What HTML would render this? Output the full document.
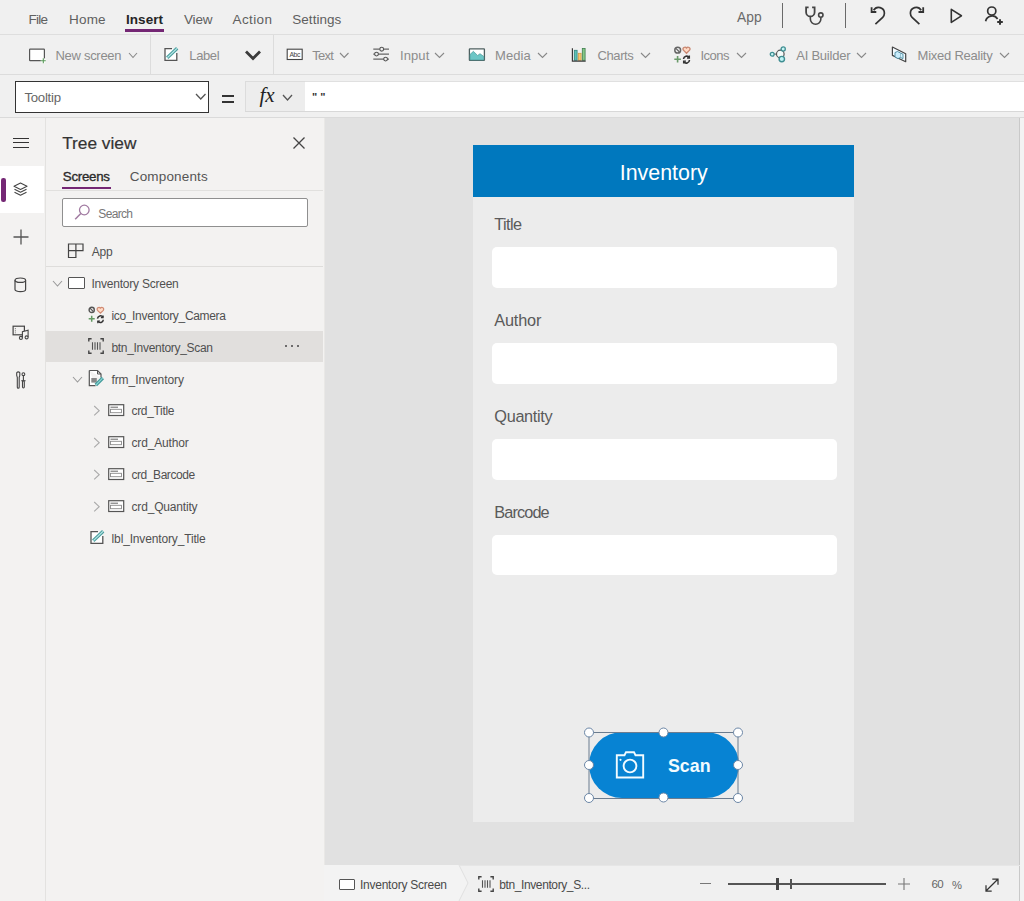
<!DOCTYPE html>
<html><head><meta charset="utf-8">
<style>
*{box-sizing:border-box;margin:0;padding:0}
html,body{width:1024px;height:901px;overflow:hidden;background:#f0f0f0;font-family:"Liberation Sans",sans-serif;color:#323130}
.a{position:absolute}
.t{position:absolute;white-space:nowrap}
svg{position:absolute;overflow:visible}
</style></head><body>
<div class="a" style="left:0px;top:0px;width:1024px;height:34px;background:#f0f0f0"></div>
<div class="a" style="left:0px;top:34px;width:1024px;height:1px;background:#dedede"></div>
<div class="t" style="left:28.6px;top:13.07px;font-size:13.5px;line-height:13.5px;color:#5f5f5f;font-weight:normal;letter-spacing:-0.778px;">File</div>
<div class="t" style="left:69.0px;top:13.07px;font-size:13.5px;line-height:13.5px;color:#5f5f5f;font-weight:normal;letter-spacing:0.185px;">Home</div>
<div class="t" style="left:126.0px;top:13.07px;font-size:13.5px;line-height:13.5px;color:#252525;font-weight:bold;letter-spacing:0.042px;">Insert</div>
<div class="a" style="left:125px;top:29px;width:39px;height:2.5px;background:#742774"></div>
<div class="t" style="left:184.0px;top:13.07px;font-size:13.5px;line-height:13.5px;color:#5f5f5f;font-weight:normal;letter-spacing:-0.175px;">View</div>
<div class="t" style="left:232.5px;top:13.07px;font-size:13.5px;line-height:13.5px;color:#5f5f5f;font-weight:normal;letter-spacing:0.394px;">Action</div>
<div class="t" style="left:292.3px;top:13.07px;font-size:13.5px;line-height:13.5px;color:#5f5f5f;font-weight:normal;letter-spacing:0.028px;">Settings</div>
<div class="t" style="left:737.0px;top:11.12px;font-size:13.8px;line-height:13.8px;color:#6a6a6a;font-weight:normal;letter-spacing:0.018px;">App</div>
<div class="a" style="left:781.5px;top:3px;width:1.2px;height:25px;background:#6a6a6a"></div>
<div class="a" style="left:845px;top:3px;width:1.2px;height:25px;background:#6a6a6a"></div>
<svg style="left:803px;top:6px" width="22" height="20" viewBox="0 0 22 20"><path d="M5.6 1.3 H3.1 V6.2 A4.25 4.25 0 0 0 11.6 6.2 V1.3 H9.1" fill="none" stroke="#444" stroke-width="1.8"/><path d="M7.35 10.4 V13 A5.25 5.25 0 0 0 17.85 13 V11.4" fill="none" stroke="#444" stroke-width="1.6"/><circle cx="17.8" cy="9.1" r="2.2" fill="none" stroke="#444" stroke-width="1.6"/></svg>
<svg style="left:866px;top:2px" width="64" height="26" viewBox="0 0 64 26"><path d="M5.6 5.3 V10 H10.3" fill="none" stroke="#333" stroke-width="1.8"/><path d="M7.6 8.3 A5.8 5.8 0 0 1 18.4 11.3 A5.8 5.8 0 0 1 16.7 15.4 L9.4 22.2" fill="none" stroke="#333" stroke-width="1.7"/><g transform="translate(62.8,0) scale(-1,1)"><path d="M5.6 5.3 V10 H10.3" fill="none" stroke="#333" stroke-width="1.8"/><path d="M7.6 8.3 A5.8 5.8 0 0 1 18.4 11.3 A5.8 5.8 0 0 1 16.7 15.4 L9.4 22.2" fill="none" stroke="#333" stroke-width="1.7"/></g></svg>
<svg style="left:949px;top:7px" width="16" height="18" viewBox="0 0 16 18"><path d="M2.3 2.4 L12.4 8.8 L2.3 15.4 Z" fill="none" stroke="#333" stroke-width="1.6" stroke-linejoin="round"/></svg>
<svg style="left:945px;top:2px" width="64" height="26" viewBox="0 0 64 26"><circle cx="46.75" cy="9.1" r="4.1" fill="none" stroke="#333" stroke-width="1.7"/><path d="M40.6 19.2 A6.6 6.6 0 0 1 52.6 17" fill="none" stroke="#333" stroke-width="1.7"/><path d="M55 17.2 V22.8 M52.2 20 H57.8" stroke="#333" stroke-width="2"/></svg>
<div class="a" style="left:0px;top:35px;width:1024px;height:40px;background:#f0f0f0"></div>
<div class="a" style="left:0px;top:74px;width:1024px;height:1px;background:#dcdcdc"></div>
<svg style="left:28px;top:47px" width="20" height="16" viewBox="0 0 20 16"><rect x="1.6" y="2.1" width="14.8" height="11.5" rx="0.6" fill="#fff" stroke="#555" stroke-width="1.2"/><path d="M15.3 11.3 V16.3 M12.8 13.8 H17.8" stroke="#fff" stroke-width="3"/><path d="M15.3 11.3 V16.3 M12.8 13.8 H17.8" stroke="#5a9a5a" stroke-width="1.1"/></svg>
<div class="t" style="left:55.5px;top:49.00px;font-size:13.0px;line-height:13.0px;color:#8c8c8c;font-weight:normal;letter-spacing:-0.293px;">New screen</div>
<svg style="left:127.5px;top:52px" width="10" height="6.5" viewBox="0 0 10 6.5"><path d="M1 1 L5.0 5.5 L9 1" fill="none" stroke="#888" stroke-width="1.1"/></svg>
<div class="a" style="left:150px;top:35px;width:1px;height:40px;background:#dcdcdc"></div>
<svg style="left:164px;top:47px" width="16" height="16" viewBox="0 0 16 16"><path d="M8 1.6 H1 V13.4 H12.8 V6" fill="#fff" stroke="#555" stroke-width="1.3"/><path d="M3.2 10.8 L13.2 1.2" stroke="#4a9e9e" stroke-width="3.3"/><path d="M3.4 10.6 L13 1.4" stroke="#b9e8e8" stroke-width="1.3"/></svg>
<div class="t" style="left:189.3px;top:49.00px;font-size:13.0px;line-height:13.0px;color:#8c8c8c;font-weight:normal;letter-spacing:-0.396px;">Label</div>
<svg style="left:244px;top:49px" width="18" height="13" viewBox="0 0 18 13"><path d="M2 2.5 L9 9.5 L16 2.5" fill="none" stroke="#3b3b3b" stroke-width="2.8"/></svg>
<div class="a" style="left:273px;top:35px;width:1px;height:40px;background:#dcdcdc"></div>
<svg style="left:285.5px;top:48px" width="18" height="13" viewBox="0 0 18 13"><rect x="1.2" y="1.2" width="15" height="10.3" fill="#fff" stroke="#444" stroke-width="1.1"/><text x="3.4" y="8.8" font-size="6.8" font-family="Liberation Sans" fill="#444" letter-spacing="-0.3">Abc</text></svg>
<div class="t" style="left:312.3px;top:49.00px;font-size:13.0px;line-height:13.0px;color:#8c8c8c;font-weight:normal;letter-spacing:-0.752px;">Text</div>
<svg style="left:338.5px;top:52px" width="10.5" height="6.5" viewBox="0 0 10.5 6.5"><path d="M1 1 L5.25 5.5 L9.5 1" fill="none" stroke="#888" stroke-width="1.1"/></svg>
<svg style="left:372px;top:46px" width="18" height="17" viewBox="0 0 18 17"><path d="M1.3 3.2 H17 M1.3 8.1 H17 M1.3 13.1 H17" stroke="#666" stroke-width="1.2"/><circle cx="9.7" cy="3.2" r="1.9" fill="#f0f0f0" stroke="#555" stroke-width="1.1"/><circle cx="4.5" cy="8.1" r="1.9" fill="#f0f0f0" stroke="#555" stroke-width="1.1"/><circle cx="13.6" cy="13.1" r="1.9" fill="#f0f0f0" stroke="#555" stroke-width="1.1"/></svg>
<div class="t" style="left:400.0px;top:49.00px;font-size:13.0px;line-height:13.0px;color:#8c8c8c;font-weight:normal;letter-spacing:0.094px;">Input</div>
<svg style="left:433.5px;top:52px" width="11" height="6.5" viewBox="0 0 11 6.5"><path d="M1 1 L5.5 5.5 L10 1" fill="none" stroke="#888" stroke-width="1.1"/></svg>
<svg style="left:468px;top:47px" width="18" height="15" viewBox="0 0 18 15"><rect x="1.4" y="1.8" width="15" height="11.6" rx="0.5" fill="#fff" stroke="#4d5f5f" stroke-width="1.3"/><path d="M2 13 V7.5 L5.4 4.3 L9.6 8.5 L12 6.7 L15.8 9.5 V13 Z" fill="#6cc6c6" stroke="#4a9a9a" stroke-width="0.7"/></svg>
<div class="t" style="left:495.0px;top:49.00px;font-size:13.0px;line-height:13.0px;color:#8c8c8c;font-weight:normal;letter-spacing:0.053px;">Media</div>
<svg style="left:536.5px;top:52px" width="11" height="6.5" viewBox="0 0 11 6.5"><path d="M1 1 L5.5 5.5 L10 1" fill="none" stroke="#888" stroke-width="1.1"/></svg>
<svg style="left:571px;top:47px" width="16" height="16" viewBox="0 0 16 16"><rect x="3.3" y="3.3" width="2.8" height="10" fill="#5cc2b6" stroke="#2e8580" stroke-width="0.8"/><rect x="7.3" y="6.3" width="2.8" height="7" fill="#f7c66e" stroke="#cf9a40" stroke-width="0.8"/><rect x="11.3" y="1.5" width="2.8" height="11.8" fill="#86c786" stroke="#3d7f4d" stroke-width="0.8"/><path d="M1.4 1.3 V14.2 H14.7" fill="none" stroke="#3a3a3a" stroke-width="1.2"/></svg>
<div class="t" style="left:597.5px;top:49.00px;font-size:13.0px;line-height:13.0px;color:#8c8c8c;font-weight:normal;letter-spacing:-0.397px;">Charts</div>
<svg style="left:639.5px;top:52px" width="11" height="6.5" viewBox="0 0 11 6.5"><path d="M1 1 L5.5 5.5 L10 1" fill="none" stroke="#888" stroke-width="1.1"/></svg>
<svg style="left:673px;top:46px" width="18" height="18" viewBox="0 0 18 18"><circle cx="4.7" cy="4.2" r="2.9" fill="none" stroke="#666" stroke-width="1.5"/><path d="M2.9 2.4 L6.5 6" stroke="#666" stroke-width="1.3"/><path d="M13.5 7.3 L10.4 4.2 A1.8 1.8 0 0 1 13.5 2 A1.8 1.8 0 0 1 16.6 4.2 Z" fill="#ffd9c4" stroke="#c98872" stroke-width="1.3"/><path d="M4.6 10 V16.5 M1.3 13.2 H7.9" stroke="#6a9a6a" stroke-width="1.6"/><path d="M10.5 13 A3.2 3.2 0 0 1 16.3 11.5 M16.5 14 A3.2 3.2 0 0 1 10.7 15.7" fill="none" stroke="#333" stroke-width="1.6"/><path d="M16.4 9.6 V12 H14 M10.6 17.6 V15.2 H13" fill="none" stroke="#333" stroke-width="1.3"/></svg>
<div class="t" style="left:700.5px;top:49.00px;font-size:13.0px;line-height:13.0px;color:#8c8c8c;font-weight:normal;letter-spacing:-0.518px;">Icons</div>
<svg style="left:735.5px;top:52px" width="11" height="6.5" viewBox="0 0 11 6.5"><path d="M1 1 L5.5 5.5 L10 1" fill="none" stroke="#888" stroke-width="1.1"/></svg>
<svg style="left:769px;top:46px" width="18" height="18" viewBox="0 0 18 18"><path d="M5 8.1 H7.5" stroke="#555" stroke-width="1"/><circle cx="3.2" cy="8.2" r="1.9" fill="#c8f4f4" stroke="#3f8e92" stroke-width="1.3"/><circle cx="11.3" cy="8" r="3.8" fill="#f4fbfa" stroke="#555" stroke-width="1.2"/><circle cx="14.2" cy="3" r="2.1" fill="#c8f4f4" stroke="#3f8e92" stroke-width="1.3"/><circle cx="12.8" cy="13.1" r="2.7" fill="#bff3f5" stroke="#3f8e92" stroke-width="1.4"/></svg>
<div class="t" style="left:796.2px;top:49.00px;font-size:13.0px;line-height:13.0px;color:#8c8c8c;font-weight:normal;letter-spacing:-0.228px;">AI Builder</div>
<svg style="left:856px;top:52px" width="11" height="6.5" viewBox="0 0 11 6.5"><path d="M1 1 L5.5 5.5 L10 1" fill="none" stroke="#888" stroke-width="1.1"/></svg>
<svg style="left:891px;top:46px" width="17" height="17" viewBox="0 0 17 17"><path d="M1.4 1 L14.7 7.7 V15.7 L1.4 9.4 Z" fill="#f4fbff" stroke="#444" stroke-width="1.2" stroke-linejoin="round"/><path d="M4 6.5 L6.5 5.5 L9.5 7 V11.5 L7 12.6 L4 11 Z" fill="#c9ecfb" stroke="#4a8aa0" stroke-width="0.9"/><path d="M9.5 7 L12 8.2 V12.6 L9.5 11.5" fill="#d6f2fb" stroke="#4a8aa0" stroke-width="0.9"/></svg>
<div class="t" style="left:917.6px;top:49.00px;font-size:13.0px;line-height:13.0px;color:#8c8c8c;font-weight:normal;letter-spacing:-0.242px;">Mixed Reality</div>
<svg style="left:998.5px;top:52px" width="11" height="6.5" viewBox="0 0 11 6.5"><path d="M1 1 L5.5 5.5 L10 1" fill="none" stroke="#888" stroke-width="1.1"/></svg>
<div class="a" style="left:0px;top:75px;width:1024px;height:43px;background:#f0f0f0"></div>
<div class="a" style="left:15px;top:81px;width:194px;height:32px;background:#fff;border:1.7px solid #333"></div>
<div class="t" style="left:24.4px;top:91.33px;font-size:13.2px;line-height:13.2px;color:#666;font-weight:normal;letter-spacing:-0.258px;">Tooltip</div>
<svg style="left:194.5px;top:93px" width="11.5" height="7" viewBox="0 0 11.5 7"><path d="M1 1 L5.75 6 L10.5 1" fill="none" stroke="#555" stroke-width="1.3"/></svg>
<div class="a" style="left:222px;top:95px;width:12px;height:2.2px;background:#333"></div>
<div class="a" style="left:222px;top:101px;width:12px;height:2.2px;background:#333"></div>
<div class="a" style="left:245px;top:80.5px;width:61px;height:31px;background:#ededed;border:1px solid #dcdcdc"></div>
<div class="t" style="left:259.5px;top:85.22px;font-size:21px;line-height:21px;color:#222;font-weight:normal;letter-spacing:-0.2px;font-family:'Liberation Serif',serif;"><i>fx</i></div>
<svg style="left:281.5px;top:93.5px" width="11" height="7" viewBox="0 0 11 7"><path d="M1 1 L5.5 6 L10 1" fill="none" stroke="#555" stroke-width="1.3"/></svg>
<div class="a" style="left:305px;top:80.5px;width:719px;height:31px;background:#fff;border:1px solid #e0e0e0;border-left:none;border-right:none"></div>
<div class="t" style="left:312px;top:92.19px;font-size:11px;line-height:11px;color:#333;font-weight:bold;letter-spacing:0px;">" "</div>
<div class="a" style="left:245px;top:111px;width:779px;height:1px;background:#d8d8d8"></div>
<div class="a" style="left:0px;top:117px;width:1024px;height:1px;background:#dadada"></div>
<div class="a" style="left:0px;top:118px;width:45px;height:783px;background:#f3f2f1"></div>
<div class="a" style="left:45px;top:118px;width:1px;height:783px;background:#e3e2e0"></div>
<div class="a" style="left:13px;top:137.5px;width:16px;height:1.3px;background:#333"></div>
<div class="a" style="left:13px;top:142px;width:16px;height:1.3px;background:#333"></div>
<div class="a" style="left:13px;top:146.5px;width:16px;height:1.3px;background:#333"></div>
<div class="a" style="left:0px;top:166px;width:44px;height:47px;background:#fff"></div>
<div class="a" style="left:1px;top:178px;width:4.5px;height:24px;background:#742774;border-radius:2.2px"></div>
<svg style="left:13px;top:182px" width="16" height="16" viewBox="0 0 16 16"><path d="M7.5 1 L14 4.2 L7.5 7.4 L1 4.2 Z" fill="none" stroke="#444" stroke-width="1.1" stroke-linejoin="round"/><path d="M1.5 7.3 L7.5 10.3 L13.5 7.3 M1.5 10.3 L7.5 13.3 L13.5 10.3" fill="none" stroke="#444" stroke-width="1.1" stroke-linejoin="round"/></svg>
<svg style="left:12px;top:228px" width="18" height="18" viewBox="0 0 18 18"><path d="M9 1.5 V16.5 M1.5 9 H16.5" stroke="#555" stroke-width="1.3"/></svg>
<svg style="left:14px;top:277px" width="14" height="16" viewBox="0 0 14 16"><ellipse cx="6.3" cy="3.2" rx="5.3" ry="2.2" fill="none" stroke="#444" stroke-width="1.2"/><path d="M1 3.2 V12.5 A5.3 2.2 0 0 0 11.6 12.5 V3.2" fill="none" stroke="#444" stroke-width="1.2"/></svg>
<svg style="left:12px;top:325px" width="18" height="16" viewBox="0 0 18 16"><rect x="1.1" y="1.2" width="11.3" height="8.6" fill="none" stroke="#444" stroke-width="1.2"/><path d="M3.4 3 V8.3" stroke="#777" stroke-width="0.9" stroke-dasharray="1.2 1"/><path d="M10.4 12.8 V6.6 L16.1 5.1 V12.3" fill="#f3f2f1" stroke="#444" stroke-width="1.1"/><circle cx="8.9" cy="12.9" r="1.5" fill="#f3f2f1" stroke="#444" stroke-width="1.1"/><circle cx="14.6" cy="12.4" r="1.5" fill="#f3f2f1" stroke="#444" stroke-width="1.1"/></svg>
<svg style="left:15px;top:371px" width="12" height="19" viewBox="0 0 12 19"><path d="M1.7 1.6 V4.3 L2.3 6.3 V16.2 A0.95 0.95 0 0 0 4.2 16.2 V6.3 L4.8 4.3 V1.6 M1.7 1.6 A2.2 2.2 0 0 1 4.8 1.6" fill="none" stroke="#444" stroke-width="1.1"/><circle cx="8.4" cy="3.2" r="1.4" fill="none" stroke="#444" stroke-width="1.1"/><path d="M8.4 4.6 V9.8 M6.2 9.8 H10.6" stroke="#444" stroke-width="1.1"/><rect x="7.5" y="9.8" width="1.8" height="7.2" rx="0.9" fill="none" stroke="#444" stroke-width="1.1"/></svg>
<div class="a" style="left:46px;top:118px;width:278px;height:783px;background:#f3f2f1"></div>
<div class="a" style="left:323.5px;top:118px;width:1px;height:783px;background:#e9e8e6"></div>
<div class="t" style="left:62.2px;top:134.86px;font-size:17.3px;line-height:17.3px;color:#333;font-weight:normal;letter-spacing:-0.011px;-webkit-text-stroke:0.2px #333;">Tree view</div>
<svg style="left:292px;top:136px" width="14" height="14" viewBox="0 0 14 14"><path d="M1.5 1.5 L12.5 12.5 M12.5 1.5 L1.5 12.5" stroke="#444" stroke-width="1.3"/></svg>
<div class="t" style="left:62.8px;top:169.84px;font-size:13.3px;line-height:13.3px;color:#2b2b2b;font-weight:normal;letter-spacing:-0.269px;-webkit-text-stroke:0.35px #2b2b2b;">Screens</div>
<div class="a" style="left:62px;top:186.5px;width:49px;height:2.8px;background:#742774"></div>
<div class="t" style="left:129.8px;top:169.87px;font-size:13.5px;line-height:13.5px;color:#555;font-weight:normal;letter-spacing:0.151px;">Components</div>
<div class="a" style="left:46px;top:189.5px;width:277px;height:1px;background:#e1e0de"></div>
<div class="a" style="left:62px;top:198px;width:246px;height:29px;background:#fff;border:1px solid #8f8f8f;border-radius:2px"></div>
<svg style="left:74px;top:204px" width="17" height="17" viewBox="0 0 17 17"><circle cx="10.3" cy="6" r="4.8" fill="none" stroke="#a17aa1" stroke-width="1.3"/><path d="M6.8 9.5 L1.2 15.2" stroke="#a17aa1" stroke-width="1.5"/></svg>
<div class="t" style="left:98.3px;top:207.84px;font-size:12.0px;line-height:12.0px;color:#777;font-weight:normal;letter-spacing:-0.668px;">Search</div>
<svg style="left:67px;top:243px" width="18" height="16" viewBox="0 0 18 16"><path d="M1.5 1 H16 V7.6 H8.9 V14.5 H1.5 Z M1.5 7.6 H8.9 V1" fill="none" stroke="#444" stroke-width="1.2"/></svg>
<div class="t" style="left:91.7px;top:246.34px;font-size:12.0px;line-height:12.0px;color:#505050;font-weight:normal;letter-spacing:-0.23px;">App</div>
<div class="a" style="left:46px;top:266px;width:277px;height:1px;background:#dedddb"></div>
<svg style="left:52px;top:279.5px" width="11" height="7" viewBox="0 0 11 7"><path d="M1 1 L5.5 6 L10 1" fill="none" stroke="#999" stroke-width="1.1"/></svg>
<div class="a" style="left:68px;top:277px;width:17px;height:12px;background:#fff;border:1.3px solid #555;border-radius:1px"></div>
<div class="t" style="left:91.5px;top:278.34px;font-size:12.0px;line-height:12.0px;color:#505050;font-weight:normal;letter-spacing:-0.228px;">Inventory Screen</div>
<svg style="left:88px;top:306px" width="17" height="17" viewBox="0 0 17 17"><circle cx="3.7" cy="3.9" r="2.6" fill="none" stroke="#555" stroke-width="1.4"/><path d="M2 2.2 L5.4 5.6" stroke="#555" stroke-width="1.2"/><path d="M12.4 7.2 L9.5 4.3 A1.7 1.7 0 0 1 12.4 2.1 A1.7 1.7 0 0 1 15.3 4.3 Z" fill="#ffdcc8" stroke="#d08a72" stroke-width="1.2"/><path d="M3.7 9.8 V15.8 M0.7 12.8 H6.7" stroke="#639963" stroke-width="1.5"/><path d="M9.5 12.6 A3 3 0 0 1 15 11.2 M15.3 13.7 A3 3 0 0 1 9.8 15.2" fill="none" stroke="#333" stroke-width="1.5"/><path d="M15.1 9.4 V11.6 H12.9 M9.8 17.2 V15 H12" fill="none" stroke="#333" stroke-width="1.2"/></svg>
<div class="t" style="left:111.4px;top:310.14px;font-size:12.0px;line-height:12.0px;color:#505050;font-weight:normal;letter-spacing:-0.325px;">ico_Inventory_Camera</div>
<div class="a" style="left:46px;top:330.5px;width:277px;height:31.5px;background:#e1dfdd"></div>
<svg style="left:88px;top:338px" width="17" height="17" viewBox="0 0 17 17"><path d="M0.8 3.6 V0.8 H3.6 M12.4 0.8 H15.2 V3.6 M15.2 12.4 V15.2 H12.4 M3.6 15.2 H0.8 V12.4" fill="none" stroke="#444" stroke-width="1.4"/><path d="M4.5 4.2 V11.8 M7 4.2 V11.8 M9.5 4.2 V11.8 M12 4.2 V11.8" stroke="#555" stroke-width="1.1"/></svg>
<div class="t" style="left:111.4px;top:341.94px;font-size:12.0px;line-height:12.0px;color:#505050;font-weight:normal;letter-spacing:-0.302px;">btn_Inventory_Scan</div>
<div class="a" style="left:285.2px;top:345px;width:1.8px;height:1.8px;background:#444;border-radius:1px"></div>
<div class="a" style="left:291.2px;top:345px;width:1.8px;height:1.8px;background:#444;border-radius:1px"></div>
<div class="a" style="left:297.2px;top:345px;width:1.8px;height:1.8px;background:#444;border-radius:1px"></div>
<svg style="left:71.5px;top:376px" width="11" height="7" viewBox="0 0 11 7"><path d="M1 1 L5.5 6 L10 1" fill="none" stroke="#999" stroke-width="1.1"/></svg>
<svg style="left:88px;top:369px" width="17" height="18" viewBox="0 0 17 18"><path d="M1.3 1.5 H9.5 L13 5 V8.5 M1.3 1.5 V16.6 H7.5" fill="#fff" stroke="#555" stroke-width="1.2"/><path d="M9.5 1.5 V5 H13" fill="none" stroke="#555" stroke-width="1"/><rect x="3.3" y="9" width="5.5" height="4.6" fill="#888"/><path d="M7.8 16 L14.8 9" stroke="#3f9a9a" stroke-width="3.4"/><path d="M8 15.8 L14.6 9.2" stroke="#8fd4d4" stroke-width="1.2"/></svg>
<div class="t" style="left:111.4px;top:374.24px;font-size:12.0px;line-height:12.0px;color:#505050;font-weight:normal;letter-spacing:-0.065px;">frm_Inventory</div>
<svg style="left:92.5px;top:405.2px" width="8" height="12" viewBox="0 0 8 12"><path d="M1.2 1 L6.2 5.7 L1.2 10.4" fill="none" stroke="#aaa" stroke-width="1.1"/></svg>
<svg style="left:108px;top:404.2px" width="17" height="13" viewBox="0 0 17 13"><rect x="0.7" y="0.7" width="15" height="10.8" fill="#fff" stroke="#555" stroke-width="1.2"/><path d="M2.5 3.2 H10" stroke="#666" stroke-width="1"/><rect x="2.5" y="5.3" width="11" height="3.4" fill="none" stroke="#8a8a8a" stroke-width="0.9"/></svg>
<div class="t" style="left:131.5px;top:405.44px;font-size:12.0px;line-height:12.0px;color:#505050;font-weight:normal;letter-spacing:-0.325px;">crd_Title</div>
<svg style="left:92.5px;top:437.09999999999997px" width="8" height="12" viewBox="0 0 8 12"><path d="M1.2 1 L6.2 5.7 L1.2 10.4" fill="none" stroke="#aaa" stroke-width="1.1"/></svg>
<svg style="left:108px;top:436.09999999999997px" width="17" height="13" viewBox="0 0 17 13"><rect x="0.7" y="0.7" width="15" height="10.8" fill="#fff" stroke="#555" stroke-width="1.2"/><path d="M2.5 3.2 H10" stroke="#666" stroke-width="1"/><rect x="2.5" y="5.3" width="11" height="3.4" fill="none" stroke="#8a8a8a" stroke-width="0.9"/></svg>
<div class="t" style="left:131.5px;top:437.34px;font-size:12.0px;line-height:12.0px;color:#505050;font-weight:normal;letter-spacing:-0.164px;">crd_Author</div>
<svg style="left:92.5px;top:469.0px" width="8" height="12" viewBox="0 0 8 12"><path d="M1.2 1 L6.2 5.7 L1.2 10.4" fill="none" stroke="#aaa" stroke-width="1.1"/></svg>
<svg style="left:108px;top:468.0px" width="17" height="13" viewBox="0 0 17 13"><rect x="0.7" y="0.7" width="15" height="10.8" fill="#fff" stroke="#555" stroke-width="1.2"/><path d="M2.5 3.2 H10" stroke="#666" stroke-width="1"/><rect x="2.5" y="5.3" width="11" height="3.4" fill="none" stroke="#8a8a8a" stroke-width="0.9"/></svg>
<div class="t" style="left:131.5px;top:469.24px;font-size:12.0px;line-height:12.0px;color:#505050;font-weight:normal;letter-spacing:-0.444px;">crd_Barcode</div>
<svg style="left:92.5px;top:500.9px" width="8" height="12" viewBox="0 0 8 12"><path d="M1.2 1 L6.2 5.7 L1.2 10.4" fill="none" stroke="#aaa" stroke-width="1.1"/></svg>
<svg style="left:108px;top:499.9px" width="17" height="13" viewBox="0 0 17 13"><rect x="0.7" y="0.7" width="15" height="10.8" fill="#fff" stroke="#555" stroke-width="1.2"/><path d="M2.5 3.2 H10" stroke="#666" stroke-width="1"/><rect x="2.5" y="5.3" width="11" height="3.4" fill="none" stroke="#8a8a8a" stroke-width="0.9"/></svg>
<div class="t" style="left:131.5px;top:501.14px;font-size:12.0px;line-height:12.0px;color:#505050;font-weight:normal;letter-spacing:-0.176px;">crd_Quantity</div>
<svg style="left:89.5px;top:529.5px" width="16" height="16" viewBox="0 0 16 16"><path d="M8 1.6 H1 V13.4 H12.8 V6" fill="#fff" stroke="#555" stroke-width="1.3"/><path d="M3.2 10.8 L13.2 1.2" stroke="#4a9e9e" stroke-width="3.3"/><path d="M3.4 10.6 L13 1.4" stroke="#b9e8e8" stroke-width="1.3"/></svg>
<div class="t" style="left:111.6px;top:532.94px;font-size:12.0px;line-height:12.0px;color:#505050;font-weight:normal;letter-spacing:-0.153px;">lbl_Inventory_Title</div>
<div class="a" style="left:324.5px;top:118px;width:695px;height:747px;background:#e1e1e1"></div>
<div class="a" style="left:1019px;top:118px;width:1.5px;height:783px;background:#c9c9c9"></div>
<div class="a" style="left:1020px;top:118px;width:4px;height:783px;background:#f3f3f3"></div>
<div class="a" style="left:473px;top:145px;width:381px;height:677px;background:#ececec"></div>
<div class="a" style="left:473px;top:145px;width:381px;height:52px;background:#0078be"></div>
<div class="t" style="left:619.7px;top:162.88px;font-size:21.4px;line-height:21.4px;color:#fff;font-weight:normal;letter-spacing:0.017px;">Inventory</div>
<div class="t" style="left:494.3px;top:216.00px;font-size:16.3px;line-height:16.3px;color:#5a5a5a;font-weight:normal;letter-spacing:-0.589px;">Title</div>
<div class="a" style="left:491.5px;top:247px;width:345px;height:40.5px;background:#fff;border-radius:5px"></div>
<div class="t" style="left:494.3px;top:312.00px;font-size:16.3px;line-height:16.3px;color:#5a5a5a;font-weight:normal;letter-spacing:-0.181px;">Author</div>
<div class="a" style="left:491.5px;top:343px;width:345px;height:40.5px;background:#fff;border-radius:5px"></div>
<div class="t" style="left:494.3px;top:408.20px;font-size:16.3px;line-height:16.3px;color:#5a5a5a;font-weight:normal;letter-spacing:-0.317px;">Quantity</div>
<div class="a" style="left:491.5px;top:439px;width:345px;height:40.5px;background:#fff;border-radius:5px"></div>
<div class="t" style="left:494.3px;top:504.20px;font-size:16.3px;line-height:16.3px;color:#5a5a5a;font-weight:normal;letter-spacing:-0.886px;">Barcode</div>
<div class="a" style="left:491.5px;top:534.5px;width:345px;height:40.5px;background:#fff;border-radius:5px"></div>
<div class="a" style="left:589px;top:732px;width:150px;height:66px;background:#0783d3;border-radius:33px"></div>
<svg style="left:615px;top:751px" width="31" height="29" viewBox="0 0 31 29"><path d="M1.8 4.2 H9.5 L11 1.2 H19 L20.5 4.2 H28.2 V26.5 H1.8 Z" fill="none" stroke="#f2fbff" stroke-width="1.9"/><circle cx="15" cy="15" r="6.4" fill="none" stroke="#f2fbff" stroke-width="1.9"/><circle cx="5.5" cy="8.8" r="1.1" fill="#f2fbff"/></svg>
<div class="t" style="left:668px;top:757.93px;font-size:17.8px;line-height:17.8px;color:#f2fbff;font-weight:bold;letter-spacing:0px;">Scan</div>
<svg style="left:584px;top:727px" width="160" height="76" viewBox="0 0 160 76"><rect x="5" y="5.5" width="149" height="66" fill="none" stroke="#6b7c8f" stroke-width="1"/><circle cx="5" cy="5.5" r="4.5" fill="#fff" stroke="#6b86a6" stroke-width="1"/><circle cx="79.5" cy="5.5" r="4.5" fill="#fff" stroke="#6b86a6" stroke-width="1"/><circle cx="154" cy="5.5" r="4.5" fill="#fff" stroke="#6b86a6" stroke-width="1"/><circle cx="5" cy="38" r="4.5" fill="#fff" stroke="#6b86a6" stroke-width="1"/><circle cx="154" cy="38" r="4.5" fill="#fff" stroke="#6b86a6" stroke-width="1"/><circle cx="5" cy="71" r="4.5" fill="#fff" stroke="#6b86a6" stroke-width="1"/><circle cx="79.5" cy="70.5" r="4.5" fill="#fff" stroke="#6b86a6" stroke-width="1"/><circle cx="154" cy="71" r="4.5" fill="#fff" stroke="#6b86a6" stroke-width="1"/></svg>
<div class="a" style="left:324px;top:865px;width:695px;height:36px;background:#f0f0f0"></div>
<div class="a" style="left:324px;top:864.5px;width:696px;height:1px;background:#e6e6e6"></div>
<div class="a" style="left:324px;top:865px;width:136px;height:36px;background:#f3f3f3"></div>
<svg style="left:458px;top:865px" width="14" height="36" viewBox="0 0 14 36"><path d="M1 0 L10 18 L1 36" fill="#f3f3f3" stroke="#e0e0e0" stroke-width="1"/></svg>
<div class="a" style="left:339px;top:878.5px;width:16px;height:11px;background:#fff;border:1.3px solid #555;border-radius:1px"></div>
<div class="t" style="left:360.0px;top:879.14px;font-size:12.0px;line-height:12.0px;color:#4a4a4a;font-weight:normal;letter-spacing:-0.248px;">Inventory Screen</div>
<svg style="left:477.5px;top:875.5px" width="17" height="17" viewBox="0 0 17 17"><path d="M0.8 3.6 V0.8 H3.6 M12.4 0.8 H15.2 V3.6 M15.2 12.4 V15.2 H12.4 M3.6 15.2 H0.8 V12.4" fill="none" stroke="#444" stroke-width="1.4"/><path d="M4.5 4.2 V11.8 M7 4.2 V11.8 M9.5 4.2 V11.8 M12 4.2 V11.8" stroke="#555" stroke-width="1.1"/></svg>
<div class="t" style="left:499.2px;top:879.14px;font-size:12.0px;line-height:12.0px;color:#4a4a4a;font-weight:normal;letter-spacing:-0.387px;">btn_Inventory_S...</div>
<div class="a" style="left:700px;top:883px;width:11px;height:1.2px;background:#777"></div>
<div class="a" style="left:727.5px;top:882.6px;width:158.5px;height:2px;background:#555"></div>
<div class="a" style="left:776px;top:877.5px;width:2.8px;height:12px;background:#444"></div>
<div class="a" style="left:789.5px;top:878.5px;width:2px;height:10.5px;background:#555"></div>
<svg style="left:897px;top:877px" width="14" height="14" viewBox="0 0 14 14"><path d="M7 1 V13 M1 7 H13" stroke="#777" stroke-width="1.1"/></svg>
<div class="t" style="left:931.4px;top:879.27px;font-size:11.5px;line-height:11.5px;color:#666;font-weight:normal;letter-spacing:-0.465px;">60</div>
<div class="t" style="left:951.9px;top:879.52px;font-size:11.2px;line-height:11.2px;color:#666;font-weight:normal;letter-spacing:0px;">%</div>
<svg style="left:984px;top:877px" width="16" height="16" viewBox="0 0 16 16"><path d="M2.2 13.8 L13.8 2.2 M8.3 2 H14 V7.7 M2 8.3 V14 H7.7" fill="none" stroke="#333" stroke-width="1.25"/></svg>
</body></html>
